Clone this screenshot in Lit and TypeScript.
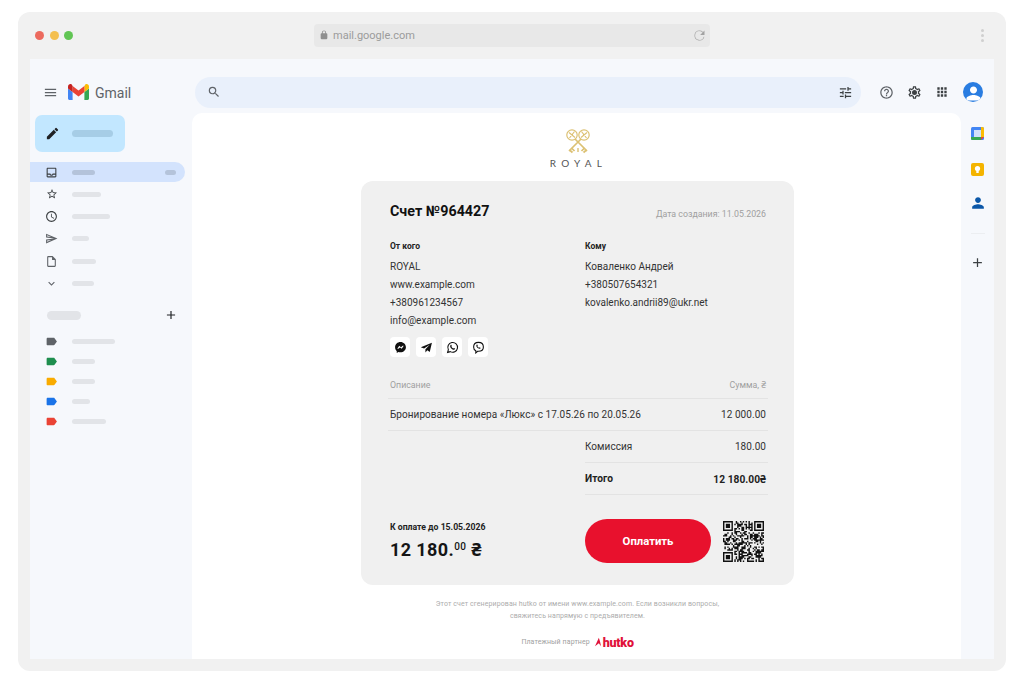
import { LitElement, html, css } from "lit";
import { customElement } from "lit/decorators.js";

const P = {
  menu: "M3 18h18v-2H3v2zm0-5h18v-2H3v2zm0-7v2h18V6H3z",
  search: "M15.5 14h-.79l-.28-.27A6.47 6.47 0 0 0 16 9.5 6.5 6.5 0 1 0 9.5 16c1.61 0 3.09-.59 4.23-1.57l.27.28v.79l5 4.99L20.49 19l-4.99-5zm-6 0C7.01 14 5 11.99 5 9.5S7.01 5 9.5 5 14 7.01 14 9.5 11.99 14 9.5 14z",
  tune: "M3 17v2h6v-2H3zM3 5v2h10V5H3zm10 16v-2h8v-2h-8v-2h-2v6h2zM7 9v2H3v2h4v2h2V9H7zm14 4v-2H11v2h10zm-6-4h2V7h4V5h-4V3h-2v6z",
  help: "M11 18h2v-2h-2v2zm1-16C6.48 2 2 6.48 2 12s4.48 10 10 10 10-4.48 10-10S17.52 2 12 2zm0 18c-4.41 0-8-3.59-8-8s3.59-8 8-8 8 3.59 8 8-3.59 8-8 8zm0-14c-2.21 0-4 1.79-4 4h2c0-1.1.9-2 2-2s2 .9 2 2c0 2-3 1.75-3 5h2c0-2.25 3-2.5 3-5 0-2.21-1.79-4-4-4z",
  gear: "M19.43 12.98c.04-.32.07-.64.07-.98s-.03-.66-.07-.98l2.11-1.65c.19-.15.24-.42.12-.64l-2-3.46c-.12-.22-.39-.3-.61-.22l-2.49 1c-.52-.4-1.08-.73-1.69-.98l-.38-2.65A.488.488 0 0 0 14 2h-4c-.25 0-.46.18-.49.42l-.38 2.65c-.61.25-1.17.59-1.69.98l-2.49-1c-.23-.09-.49 0-.61.22l-2 3.46c-.13.22-.07.49.12.64l2.11 1.65c-.04.32-.07.65-.07.98s.03.66.07.98l-2.11 1.65c-.19.15-.24.42-.12.64l2 3.46c.12.22.39.3.61.22l2.49-1c.52.4 1.08.73 1.69.98l.38 2.65c.03.24.24.42.49.42h4c.25 0 .46-.18.49-.42l.38-2.65c.61-.25 1.17-.59 1.69-.98l2.49 1c.23.09.49 0 .61-.22l2-3.46c.12-.22.07-.49-.12-.64l-2.11-1.65zM17.45 11.27c.04.31.05.52.05.73s-.02.43-.05.73l-.14 1.13.89.7 1.08.84-.7 1.21-1.27-.51-1.04-.42-.9.68c-.43.32-.84.56-1.25.73l-1.06.43-.16 1.13-.2 1.35h-1.4l-.19-1.35-.16-1.13-1.06-.43c-.43-.18-.83-.41-1.23-.71l-.91-.7-1.06.43-1.27.51-.7-1.21 1.08-.84.89-.7-.14-1.13c-.03-.31-.05-.54-.05-.74s.02-.43.05-.73l.14-1.13-.89-.7-1.08-.84.7-1.21 1.27.51 1.04.42.9-.68c.43-.32.84-.56 1.25-.73l1.06-.43.16-1.13.2-1.35h1.39l.19 1.35.16 1.13 1.06.43c.43.18.83.41 1.23.71l.91.7 1.06-.43 1.27-.51.7 1.21-1.07.85-.89.7.14 1.13zM12 8a4 4 0 1 0 0 8 4 4 0 0 0 0-8z",
  inbox: "M19 3H5c-1.1 0-2 .9-2 2v14c0 1.1.9 2 2 2h14c1.1 0 2-.9 2-2V5c0-1.1-.9-2-2-2zm0 16H5v-3h3.56c.69 1.19 1.97 2 3.44 2s2.75-.81 3.44-2H19v3zm0-5h-4.99c0 1.1-.9 2-2 2s-2-.9-2-2H5V5h14v9z",
  star: "M22 9.24l-7.19-.62L12 2 9.19 8.63 2 9.24l5.46 4.73L5.82 21 12 17.27 18.18 21l-1.63-7.03L22 9.24zM12 15.4l-3.76 2.27 1-4.28-3.32-2.88 4.38-.38L12 6.1l1.71 4.04 4.38.38-3.32 2.88 1 4.28L12 15.4z",
  clock: "M11.99 2C6.47 2 2 6.48 2 12s4.47 10 9.99 10C17.52 22 22 17.52 22 12S17.52 2 11.99 2zM12 20c-4.42 0-8-3.58-8-8s3.58-8 8-8 8 3.58 8 8-3.58 8-8 8zm.5-13H11v6l5.25 3.15.75-1.23-4.5-2.67z",
  send: "M4.01 6.03l7.51 3.22-7.52-1 .01-2.22m7.5 8.72L4 17.97v-2.22l7.51-1M2.01 3L2 10l15 2-15 2 .01 7L23 12 2.01 3z",
  doc: "M14 2H6c-1.1 0-1.99.9-1.99 2L4 20c0 1.1.89 2 1.99 2H18c1.1 0 2-.9 2-2V8l-6-6zM6 20V4h7v5h5v11H6z",
  chev: "M7.41 8.59L12 13.17l4.59-4.58L18 10l-6 6-6-6z",
  pencil: "M3 17.25V21h3.75L17.81 9.94l-3.75-3.75L3 17.25zM20.71 7.04a1 1 0 0 0 0-1.41l-2.34-2.34a1 1 0 0 0-1.41 0l-1.83 1.83 3.75 3.75 1.83-1.83z",
  tag: "M17.63 5.84C17.27 5.33 16.67 5 16 5L5 5.01C3.9 5.01 3 5.9 3 7v10c0 1.1.9 1.99 2 1.99L16 19c.67 0 1.27-.33 1.63-.84L22 12l-4.37-6.16z",
  plus: "M19 13h-6v6h-2v-6H5v-2h6V5h2v6h6v2z",
  lock: "M18 8h-1V6c0-2.76-2.24-5-5-5S7 3.24 7 6v2H6c-1.1 0-2 .9-2 2v10c0 1.1.9 2 2 2h12c1.1 0 2-.9 2-2V10c0-1.1-.9-2-2-2zM9 8V6c0-1.66 1.34-3 3-3s3 1.34 3 3v2H9z",
  reload: "M17.65 6.35A7.95 7.95 0 0 0 12 4a8 8 0 1 0 7.73 10h-1.04A7 7 0 1 1 12 5c1.93 0 3.66.8 4.93 2.07L13 11h7V4l-2.35 2.35z",
  person: "M12 12c2.7 0 5-2.3 5-5s-2.3-5-5-5-5 2.3-5 5 2.3 5 5 5zm0 2c-3.3 0-10 1.7-10 5v3h20v-3c0-3.3-6.7-5-10-5z",
  apps: "M4 8h4V4H4v4zm6 12h4v-4h-4v4zm-6 0h4v-4H4v4zm0-6h4v-4H4v4zm6 0h4v-4h-4v4zm6-10v4h4V4h-4zm-6 4h4V4h-4v4zm6 6h4v-4h-4v4zm0 6h4v-4h-4v4z",
};

const ic = (d: string, cls: string) =>
  html`<svg class="ic ${cls}" viewBox="0 0 24 24"><path d=${d}></path></svg>`;

const bar = (w: number, cls = "") =>
  html`<span class="bar ${cls}" style="width:${w}px"></span>`;

function qrPath(): string {
  const n = 29;
  const seedRows: number[] = [];
  let s = 964427;
  for (let i = 0; i < n * n; i++) {
    s = (s * 1103515245 + 12345) & 0x7fffffff;
    seedRows.push((s >> 16) & 1);
  }
  const inFinder = (x: number, y: number, a: number, b: number) =>
    x >= a - 1 && x <= a + 7 && y >= b - 1 && y <= b + 7;
  const finderOn = (x: number, y: number, a: number, b: number) => {
    const dx = x - a, dy = y - b;
    if (dx < 0 || dy < 0 || dx > 6 || dy > 6) return false;
    return dx === 0 || dy === 0 || dx === 6 || dy === 6 || (dx >= 2 && dx <= 4 && dy >= 2 && dy <= 4);
  };
  const finders = [[0, 0], [22, 0], [0, 22]];
  let d = "";
  for (let y = 0; y < n; y++) {
    for (let x = 0; x < n; x++) {
      let on = seedRows[y * n + x] === 1;
      for (const [a, b] of finders) {
        if (inFinder(x, y, a, b)) on = finderOn(x, y, a, b);
      }
      if (on) d += `M${x} ${y}h1v1h-1z`;
    }
  }
  return d;
}
const QR = qrPath();

const NAV = [
  { d: P.star, w: 29, c: "s12" },
  { d: P.clock, w: 38, c: "s13" },
  { d: P.send, w: 17, c: "s13 soft" },
  { d: P.doc, w: 24, c: "s13 soft" },
  { d: P.chev, w: 22, c: "s13 soft" },
];
const LABELS = [
  { c: "tg-grey", w: 43 },
  { c: "tg-green", w: 23 },
  { c: "tg-yellow", w: 23 },
  { c: "tg-blue", w: 18 },
  { c: "tg-red", w: 34 },
];

@customElement("app-root")
export class AppRoot extends LitElement {
  static styles = css`
    :host {
      display: block;
      width: 1024px;
      height: 683px;
      background: #fff;
      font-family: Roboto, "Noto Sans", sans-serif;
      overflow: hidden;
    }
    * { box-sizing: border-box; }
    .ic { display: block; flex: none; fill: #5f6368; }
    .s10 { width: 10px; height: 10px; }
    .s12 { width: 12px; height: 12px; margin: 0 .5px; }
    .s13 { width: 13px; height: 13px; }
    .s14 { width: 14px; height: 14px; }
    .s15 { width: 15px; height: 15px; }
    .s16 { width: 16px; height: 16px; }
    .dark { fill: #3c4043; }
    .soft { fill: #5f6368; }
    .black { fill: #202124; }
    .bar { display: block; height: 5px; border-radius: 3px; background: #e2e4e8; flex: none; }

    .win {
      margin: 12px 18px;
      height: 659px;
      background: #f1f1f1;
      border-radius: 12px;
      display: flex;
      flex-direction: column;
      padding: 0 12px 12px;
    }
    .chrome {
      height: 47px;
      flex: none;
      display: flex;
      align-items: center;
      padding-bottom: 1px;
    }
    .dots { display: flex; gap: 5.5px; margin-left: 5px; width: 279px; }
    .dot { width: 9px; height: 9px; border-radius: 50%; }
    .d1 { background: #ec6a5e; }
    .d2 { background: #f4bf4f; }
    .d3 { background: #61c554; }
    .url {
      width: 396px;
      height: 23px;
      background: #e8e8e8;
      border-radius: 4px;
      display: flex;
      align-items: center;
      padding: 0 3px 0 5px;
      font-size: 11px;
      color: #9b9b9b;
    }
    .url .ic { fill: #8f8f8f; }
    .url span { margin-left: 4px; flex: 1; }
    .url .reload { fill: #a2a2a2; width: 15px; height: 15px; }
    .kebab { display: flex; flex-direction: column; gap: 2px; margin-left: 271px; }
    .kebab i { display: block; width: 3px; height: 3px; border-radius: 50%; background: #cfcfcf; }

    .inner { flex: 1; min-height: 0; display: flex; background: #f6f8fc; }
    .side { width: 162px; flex: none; display: flex; flex-direction: column; }
    .brand { display: flex; align-items: center; height: 24px; margin-top: 21px; padding-left: 13px; }
    .gm { width: 21px; height: 16px; margin-left: 10px; flex: none; }
    .gname { margin-left: 6px; font-size: 14px; line-height: 24px; padding-top: 1px; color: #5f6368; }
    .compose {
      margin: 11px 0 0 5px;
      width: 90px;
      height: 37px;
      border-radius: 7px;
      background: #c2e7ff;
      display: flex;
      align-items: center;
      padding-left: 10px;
      gap: 12px;
    }
    .compose .bar { height: 7px; background: #a6cde6; border-radius: 4px; }
    .nav { margin-top: 10px; display: flex; flex-direction: column; }
    .row { height: 22.4px; display: flex; align-items: center; padding-left: 15px; gap: 13px; }
    .row .bar { margin-left: 1px; }
    .active {
      height: 20px;
      width: 155px;
      background: #d3e3fd;
      border-radius: 0 10px 10px 0;
      margin-bottom: 1px;
      justify-content: space-between;
      padding-right: 9px;
      gap: 0;
    }
    .active .bar { background: #b4c3da; margin: 0; }
    .active .left { display: flex; align-items: center; gap: 14px; }
    .lh {
      margin: 16px 0 0 17px;
      height: 9px;
      display: flex;
      align-items: center;
      justify-content: space-between;
      width: 131px;
    }
    .lh .bar { height: 9px; border-radius: 5px; }
    .labels { margin-top: 12px; display: flex; flex-direction: column; }
    .labels .row { height: 20px; }
    .tg-grey { fill: #5f6368; }
    .tg-green { fill: #1e8e4e; }
    .tg-yellow { fill: #f9ab00; }
    .tg-blue { fill: #1a73e8; }
    .tg-red { fill: #ea4335; }

    .right { flex: 1; min-width: 0; display: flex; flex-direction: column; }
    .top { height: 54px; flex: none; display: flex; align-items: center; padding: 12px 0 0 3px; }
    .searchbar {
      width: 666px;
      height: 31px;
      border-radius: 16px;
      background: #e9f0fb;
      display: flex;
      align-items: center;
      justify-content: space-between;
      padding: 0 8px 0 12px;
    }
    .tools { display: flex; align-items: center; margin-left: 18px; }
    .tools .gap1 { margin-left: 13px; }
    .tools .gap2 { margin-left: 13px; }
    .avatar { margin-left: 14px; width: 20px; height: 20px; border-radius: 50%; background: #2a7de1; overflow: hidden; display: flex; align-items: flex-end; justify-content: center; }
    .avatar .ic { fill: #fff; width: 17px; height: 17px; }

    .body { flex: 1; min-height: 0; display: flex; }
    .main {
      flex: 1;
      background: #fff;
      border-radius: 10px 10px 0 0;
      display: flex;
      flex-direction: column;
      align-items: center;
      padding: 16px 0 0 2px;
    }
    .keys { width: 26px; height: 25px; display: block; }
    .royal { margin-top: 3px; font-size: 10px; line-height: 12px; letter-spacing: 5.2px; margin-right: -2px; color: #555; font-family: Lato, Roboto, sans-serif; }
    .card {
      margin-top: 12px;
      width: 433px;
      background: #f0f0f0;
      border-radius: 12px;
      padding: 20px 28px 22px 29px;
      display: flex;
      flex-direction: column;
      flex: none;
    }
    .chead { display: flex; justify-content: space-between; align-items: center; }
    .title { font-size: 14.3px; line-height: 20px; font-weight: 700; color: #111; }
    .date { font-size: 8.8px; color: #9f9f9f; padding-top: 6px; }
    .parties { margin-top: 19px; display: grid; grid-template-columns: 195px 1fr; }
    .plabel { font-size: 8.5px; line-height: 12px; font-weight: 700; color: #222; margin-bottom: 6px; }
    .pline { font-size: 10px; line-height: 18px; color: #333; }
    .social { display: flex; gap: 6px; margin-top: 7px; }
    .sq { width: 20px; height: 20px; background: #fff; border-radius: 4px; display: flex; align-items: center; justify-content: center; }
    .sq svg { width: 13px; height: 13px; display: block; }
    .thead {
      margin: 21px -2px 0;
      padding: 0 2px;
      height: 21px;
      display: flex;
      justify-content: space-between;
      font-size: 8.8px;
      line-height: 14px;
      color: #9f9f9f;
      border-bottom: 1px solid #e3e3e3;
    }
    .trow {
      margin: 0 -2px;
      padding: 0 2px;
      height: 32px;
      display: flex;
      justify-content: space-between;
      align-items: center;
      font-size: 10px;
      letter-spacing: 0.05px;
      color: #333;
      border-bottom: 1px solid #e3e3e3;
    }
    .fee { margin-left: 195px; margin-right: -2px; padding: 0 2px 0 0; }
    .strong { font-weight: 700; color: #222; font-size: 10.2px; }
    .bottom { margin-top: 24px; display: flex; align-items: center; }
    .due { width: 195px; display: flex; flex-direction: column; }
    .duel { font-size: 8.7px; line-height: 12px; font-weight: 700; color: #222; margin-top: 1px; }
    .amount { margin-top: 5px; font-size: 18px; line-height: 24px; font-weight: 700; color: #151515; letter-spacing: 0.4px; }
    .amount sup { font-size: 10px; font-weight: 500; vertical-align: 6px; line-height: 0; }
    .pay {
      width: 126px;
      height: 44px;
      border-radius: 22px;
      background: #e8112d;
      color: #fff;
      font-size: 11.3px;
      font-weight: 700;
      display: flex;
      align-items: center;
      justify-content: center;
    }
    .qr { width: 41px; height: 41px; margin-left: 12px; display: block; }
    .foot { margin-top: 13px; font-size: 7px; line-height: 12px; color: #acacac; text-align: center; letter-spacing: 0.1px; }
    .partner { margin-top: 14px; height: 12px; display: flex; align-items: center; gap: 5px; font-size: 7px; color: #a0a0a0; letter-spacing: 0.1px; }
    .hut { display: flex; align-items: center; color: #e0123a; font-size: 12.5px; font-weight: 900; letter-spacing: -0.3px; gap: 2px; }
    .hut svg { width: 6px; height: 10px; display: block; fill: #e0123a; }

    .rail { width: 33px; flex: none; display: flex; flex-direction: column; align-items: center; padding: 14px 0 0; }
    .rail svg { display: block; flex: none; }
    .ri { width: 13px; height: 13px; }
    .keep { margin-top: 23px; }
    .contact { margin-top: 20px; width: 14px; height: 14px; fill: #0b57a8; }
    .sep { width: 14px; height: 1px; background: #eceef1; margin-top: 23px; }
    .rplus { margin-top: 21px; width: 15px; height: 15px; fill: #3c4043; }
  `;

  render() {
    return html`
      <div class="win">
        <div class="chrome">
          <div class="dots"><span class="dot d1"></span><span class="dot d2"></span><span class="dot d3"></span></div>
          <div class="url">
            ${ic(P.lock, "s10")}
            <span>mail.google.com</span>
            ${ic(P.reload, "reload")}
          </div>
          <div class="kebab"><i></i><i></i><i></i></div>
        </div>
        <div class="inner">
          <aside class="side">
            <div class="brand">
              ${ic(P.menu, "s15")}
              <svg class="gm" viewBox="0 0 21 16">
                <path fill="#4285f4" d="M1.4 16H4.6V8L0 4.6V14.6C0 15.4.6 16 1.4 16z"></path>
                <path fill="#34a853" d="M16.4 16h3.2c.8 0 1.4-.6 1.4-1.4V4.6L16.4 8z"></path>
                <path fill="#fbbc04" d="M16.4 2V8L21 4.6V2.4C21 .5 18.800-.6 17.300.5z"></path>
                <path fill="#ea4335" d="M4.600 8V2l5.900 4.400L16.400 2v6l-5.900 4.400z"></path>
                <path fill="#c5221f" d="M0 2.400V4.600L4.600 8V2L3.700.5C2.200-.6 0 .5 0 2.400z"></path>
              </svg>
              <span class="gname">Gmail</span>
            </div>
            <div class="compose">${ic(P.pencil, "s15 black")}${bar(41)}</div>
            <div class="nav">
              <div class="row active">
                <span class="left">${ic(P.inbox, "s13 dark")}${bar(23)}</span>
                ${bar(11)}
              </div>
              ${NAV.map((n) => html`<div class="row">${ic(n.d, n.c + " dark")}${bar(n.w)}</div>`)}
            </div>
            <div class="lh">${bar(34)}${ic(P.plus, "s14 black")}</div>
            <div class="labels">
              ${LABELS.map((l) => html`<div class="row">${ic(P.tag, "s13 " + l.c)}${bar(l.w)}</div>`)}
            </div>
          </aside>
          <div class="right">
            <div class="top">
              <div class="searchbar">${ic(P.search, "s14")}${ic(P.tune, "s15 dark")}</div>
              <div class="tools">
                ${ic(P.help, "s15")}
                <span class="gap1">${ic(P.gear, "s15 dark")}</span>
                <span class="gap2">${ic(P.apps, "s14 dark")}</span>
                <span class="avatar">${ic(P.person, "")}</span>
              </div>
            </div>
            <div class="body">
              <main class="main">
                <svg class="keys" viewBox="0 0 26 25" fill="none" stroke="#dcc173" stroke-width="1.200">
                  <circle cx="7" cy="6" r="5.200"></circle>
                  <circle cx="19" cy="6" r="5.200"></circle>
                  <path d="M4 3.500l6 5M4.500 9l5-6.500M22 3.500l-6 5M21.500 9l-5-6.500"></path>
                  <path stroke-width="1.700" d="M10 10L22 22M16 10L4 22"></path>
                  <path stroke-width="1.700" d="M19.500 19l-3 3M21.500 21l-3 2.500M6.500 19l3 3M4.500 21l3 2.500"></path>
                  <path stroke-width="1.400" d="M13 19v4"></path>
                </svg>
                <div class="royal">ROYAL</div>
                <section class="card">
                  <div class="chead">
                    <div class="title">Счет №964427</div>
                    <div class="date">Дата создания: 11.05.2026</div>
                  </div>
                  <div class="parties">
                    <div>
                      <div class="plabel">От кого</div>
                      <div class="pline">ROYAL</div>
                      <div class="pline">www.example.com</div>
                      <div class="pline">+380961234567</div>
                      <div class="pline">info@example.com</div>
                    </div>
                    <div>
                      <div class="plabel">Кому</div>
                      <div class="pline">Коваленко Андрей</div>
                      <div class="pline">+380507654321</div>
                      <div class="pline">kovalenko.andrii89@ukr.net</div>
                    </div>
                  </div>
                  <div class="social">
                    <span class="sq"><svg viewBox="0 0 24 24"><path fill="#111" d="M12 2C6.400 2 2 6.100 2 11.600c0 2.900 1.200 5.400 3.100 7.100V22l3-1.700c1.200.4 2.500.6 3.900.6 5.600 0 10-4.100 10-9.300S17.600 2 12 2z"></path><path fill="#fff" d="M6 14.500l3.700-5.600 3.200 2.500 3.100-2.500 2 0-3.700 5.600-3.200-2.500-3.100 2.500z"></path></svg></span>
                    <span class="sq"><svg viewBox="0 0 24 24"><path fill="#111" d="M22 3L1.500 11.500l6 2.300L18 7l-8 8.300V21l3.500-3.700 4.500 3.200z"></path></svg></span>
                    <span class="sq"><svg viewBox="0 0 24 24"><path fill="none" stroke="#111" stroke-width="2" d="M3 21l1.400-5A9 9 0 1 1 8 19.600z"></path><path fill="#111" d="M8.500 7.500c.5-.5 1.300-.5 1.600.2l.7 1.600-.8 1.200c.8 1.500 1.900 2.600 3.500 3.400l1.200-1 1.800.9c.5.300.5 1-.1 1.600-1 1-2.800 1-5-.3-3-1.800-5-5.400-2.900-7.600z"></path></svg></span>
                    <span class="sq"><svg viewBox="0 0 24 24"><path fill="none" stroke="#111" stroke-width="2" d="M12 2.500c-5 0-9 2-9 8.500 0 4 1.300 6 4 7.200V22l3.300-3H12c6 0 9-2.500 9-8 0-6.500-4-8.500-9-8.500z"></path><path fill="#111" d="M8.600 7c.5-.5 1.200-.4 1.500.2l.6 1.300-.7 1c.7 1.300 1.700 2.200 3 2.900l1-.8 1.500.8c.5.300.5.900 0 1.400-.9.900-2.400.9-4.300-.2-2.600-1.600-4.300-4.600-2.600-6.600z"></path></svg></span>
                  </div>
                  <div class="thead"><span>Описание</span><span>Сумма, ₴</span></div>
                  <div class="trow"><span>Бронирование номера «Люкс» с 17.05.26 по 20.05.26</span><span>12 000.00</span></div>
                  <div class="trow fee"><span>Комиссия</span><span>180.00</span></div>
                  <div class="trow fee strong"><span>Итого</span><span>12 180.00₴</span></div>
                  <div class="bottom">
                    <div class="due">
                      <div class="duel">К оплате до 15.05.2026</div>
                      <div class="amount">12 180.<sup>00</sup> ₴</div>
                    </div>
                    <div class="pay">Оплатить</div>
                    <svg class="qr" viewBox="0 0 29 29"><path fill="#111" d=${QR}></path></svg>
                  </div>
                </section>
                <div class="foot">
                  Этот счет сгенерирован hutko от имени www.example.com. Если возникли вопросы,<br />
                  свяжитесь напрямую с предъявителем.
                </div>
                <div class="partner">
                  <span>Платежный партнер</span>
                  <span class="hut"><svg viewBox="0 0 7 10"><path d="M0 10L4.500 0 6 5 7 10 4.500 6.500 3 7.500z"></path></svg>hutko</span>
                </div>
              </main>
              <div class="rail">
                <svg class="ri" viewBox="0 0 13 13">
                  <rect width="13" height="13" rx="1.500" fill="#4285f4"></rect>
                  <rect x="3" y="3" width="7" height="7" fill="#cfe0fb"></rect>
                  <path fill="#fbbc04" d="M10 0h1.500A1.500 1.500 0 0 1 13 1.500V10h-3z"></path>
                  <path fill="#34a853" d="M0 10h10v3H1.500A1.500 1.500 0 0 1 0 11.500z"></path>
                  <path fill="#ea4335" d="M10 10h3l-3 3z"></path>
                </svg>
                <svg class="ri keep" viewBox="0 0 13 13">
                  <rect width="13" height="13" rx="2" fill="#f4b400"></rect>
                  <circle cx="6.500" cy="5.500" r="2.600" fill="#fff"></circle>
                  <rect x="5.300" y="8" width="2.400" height="2" fill="#fff"></rect>
                </svg>
                <svg class="ic contact" viewBox="0 0 24 24"><path d=${P.person}></path></svg>
                <span class="sep"></span>
                <svg class="ic rplus" viewBox="0 0 24 24"><path d=${P.plus}></path></svg>
              </div>
            </div>
          </div>
        </div>
      </div>
    `;
  }
}
